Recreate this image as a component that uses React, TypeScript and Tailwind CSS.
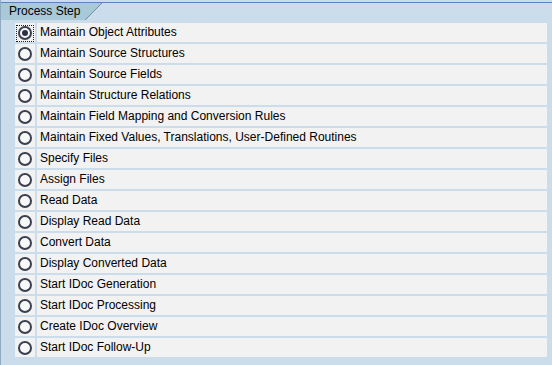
const STEPS = [
  "Maintain Object Attributes",
  "Maintain Source Structures",
  "Maintain Source Fields",
  "Maintain Structure Relations",
  "Maintain Field Mapping and Conversion Rules",
  "Maintain Fixed Values, Translations, User-Defined Routines",
  "Specify Files",
  "Assign Files",
  "Read Data",
  "Display Read Data",
  "Convert Data",
  "Display Converted Data",
  "Start IDoc Generation",
  "Start IDoc Processing",
  "Create IDoc Overview",
  "Start IDoc Follow-Up",
];

function Radio({ checked }: { checked: boolean }) {
  return (
    <div className="relative w-[20px] h-[19px] bg-[#f2f2f2] flex items-center justify-center shrink-0">
      {checked && (
        <div className="absolute left-[1px] top-[2px] w-[18px] h-[17px] border border-dotted border-[#222]" />
      )}
      <div className="w-[14px] h-[14px] rounded-full border-2 border-[#3a4050] bg-[#f8f8f8] flex items-center justify-center">
        {checked && <div className="w-[6px] h-[6px] rounded-full bg-[#2b3141]" />}
      </div>
    </div>
  );
}

export default function App() {
  const selected = 0;
  return (
    <div
      className="w-[552px] h-[365px] bg-[#cbdcea] border-l border-[#8fabc6] overflow-hidden"
      style={{ fontFamily: '"Liberation Sans", Arial, sans-serif' }}
    >
      <div className="pt-[2px]">
        <div className="border-t border-[#5b87b8] h-[18px] relative">
          <svg className="absolute left-0 top-0" width="102" height="17" viewBox="0 0 102 17">
            <polygon points="0,0 101,0 85,17 0,17" fill="#a9c9d8" />
            <line x1="101" y1="0" x2="84" y2="17" stroke="#6f8fa8" strokeWidth="1" />
          </svg>
          <div className="relative pl-[8px] text-[12px] leading-[17px] text-black">Process Step</div>
        </div>
      </div>
      <div className="pt-[3px] flex flex-col gap-[2px] pl-[14px] pr-[5px]">
        {STEPS.map((s, i) => (
          <div key={s} className="flex gap-[2px] h-[19px]">
            <Radio checked={i === selected} />
            <div className="flex-1 bg-[#f2f2f2] pl-[3px] text-[12px] leading-[19px] text-black whitespace-nowrap">
              {s}
            </div>
          </div>
        ))}
      </div>
    </div>
  );
}
